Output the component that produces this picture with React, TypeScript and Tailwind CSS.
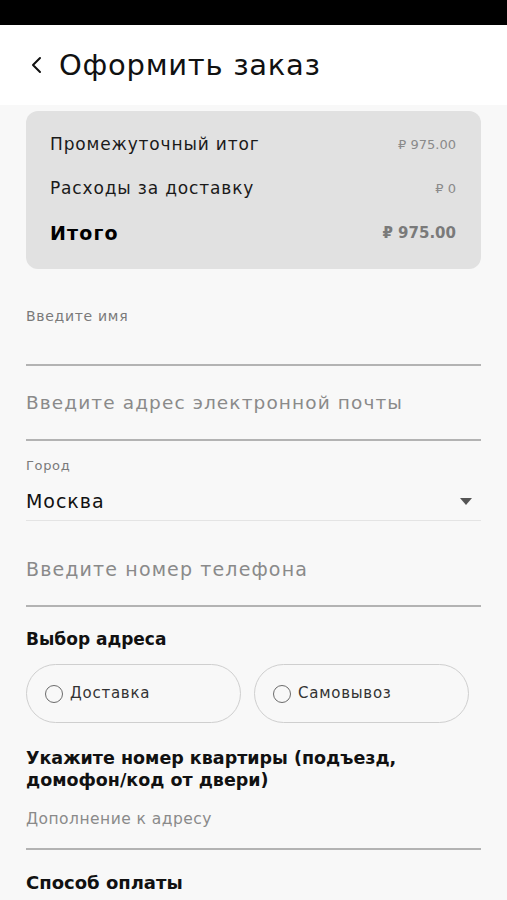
const font = { fontFamily: '"DejaVu Sans", "Noto Sans", sans-serif' };

function Radio({ label }: { label: string }) {
  return (
    <div className="flex h-[59px] w-[215px] items-center gap-[7px] rounded-full border border-[#cfcfcf] pl-[18px]">
      <span className="h-[18px] w-[18px] rounded-full border-[1.5px] border-[#6b6b6b]" />
      <span className="text-[15px] tracking-[0.05em] text-[#333]">{label}</span>
    </div>
  );
}

function Row({ label, value, bold }: { label: string; value: string; bold?: boolean }) {
  return (
    <div className="flex h-[44px] items-center justify-between">
      <span
        className={
          bold
            ? "text-[19px] font-bold tracking-[0.06em] text-black"
            : "text-[17px] tracking-[0.05em] text-[#1a1a1a]"
        }
      >
        {label}
      </span>
      <span className={bold ? "text-[15px] font-bold text-[#7a7a7a]" : "text-[13px] text-[#8a8a8a]"}>{value}</span>
    </div>
  );
}

export default function App() {
  return (
    <div className="min-h-screen w-full bg-[#f8f8f8]" style={font}>
      <div className="h-[25px] bg-black" />
      <header className="flex h-[80px] items-center gap-[17px] bg-white pl-[30px]">
        <svg width="12" height="18" viewBox="0 0 12 18" fill="none">
          <polyline points="10,2 3,9 10,16" stroke="#111" strokeWidth="2" strokeLinecap="round" strokeLinejoin="round" />
        </svg>
        <h1 className="text-[29px] leading-none tracking-[0.025em] text-[#111]">Оформить заказ</h1>
      </header>

      <main className="px-[26px] pt-[6px]">
        <div className="rounded-[12px] bg-[#e1e1e1] pl-[24px] pr-[25px] pt-[12px] pb-[14px]">
          <Row label="Промежуточный итог" value="₽ 975.00" />
          <Row label="Расходы за доставку" value="₽ 0" />
          <Row label="Итого" value="₽ 975.00" bold />
        </div>

        <div className="pt-[39px]">
          <div className="text-[14px] leading-[16px] tracking-[0.05em] text-[#7a7a7a]">Введите имя</div>
          <div className="h-[42px] border-b-2 border-[#b3b3b3]" />
        </div>

        <div className="h-[75px] border-b-2 border-[#b3b3b3] pt-[26px]">
          <div className="text-[18.5px] leading-[22px] tracking-[0.06em] text-[#8a8a8a]">
            Введите адрес электронной почты
          </div>
        </div>

        <div className="border-b border-[#e4e4e4] pt-[17px] pb-[8px]">
          <div className="text-[13px] leading-[16px] tracking-[0.05em] text-[#7a7a7a]">Город</div>
          <div className="mt-[16px] flex items-center justify-between pr-[9px]">
            <span className="text-[19px] leading-[22px] tracking-[0.05em] text-[#111]">Москва</span>
            <svg width="12" height="7" viewBox="0 0 12 7">
              <polygon points="0,0 12,0 6,7" fill="#555" />
            </svg>
          </div>
        </div>

        <div className="border-b-2 border-[#b3b3b3] pt-[37px] pb-[25px]">
          <div className="text-[19px] leading-[22px] tracking-[0.06em] text-[#8a8a8a]">Введите номер телефона</div>
        </div>

        <h2 className="mt-[21px] text-[17px] font-bold leading-[22px] text-[#111]">Выбор адреса</h2>

        <div className="mt-[14px] flex gap-[13px]">
          <Radio label="Доставка" />
          <Radio label="Самовывоз" />
        </div>

        <h2 className="mt-[24px] text-[17.5px] font-bold leading-[22px] text-[#111]">
          Укажите номер квартиры (подъезд, домофон/код от двери)
        </h2>

        <div className="mt-[18px] border-b-2 border-[#b3b3b3] pb-[19px]">
          <div className="text-[15.5px] leading-[20px] tracking-[0.03em] text-[#8a8a8a]">Дополнение к адресу</div>
        </div>

        <h2 className="mt-[22px] text-[18px] font-bold leading-[22px] text-[#111]">Способ оплаты</h2>
      </main>
    </div>
  );
}
